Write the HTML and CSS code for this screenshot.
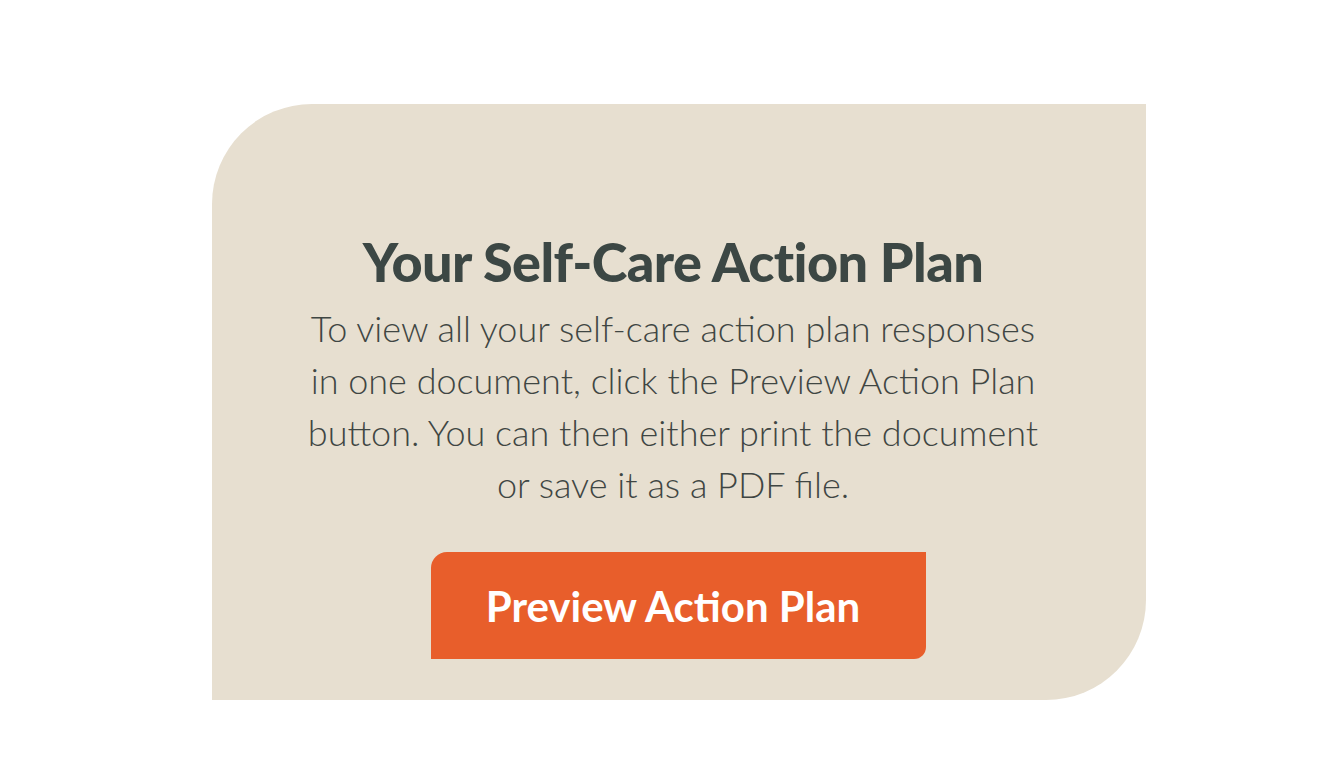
FILE: index.html
```html
<!DOCTYPE html>
<html>
<head>
<meta charset="utf-8">
<link rel="stylesheet" href="styles.css">
</head>
<body>
<main class="page">
  <section class="card">
    <div class="text">
      <h2 class="title">Your Self-Care Action Plan</h2>
      <p class="desc">To view all your self-care action plan responses in one document, click the Preview Action Plan button. You can then either print the document or save it as a PDF file.</p>
    </div>
    <button class="btn">Preview Action Plan</button>
  </section>
</main>
</body>
</html>
```

FILE: styles.css
```css
html, body {
  margin: 0;
  padding: 0;
  background: #ffffff;
}
.page {
  padding: 104px 0 0 212px;
}
.card {
  box-sizing: border-box;
  width: 934px;
  height: 596px;
  background: #e7dfd0;
  border-radius: 100px 0 100px 0;
  padding-top: 126px;
  display: flex;
  flex-direction: column;
}
.text {
  width: 748px;
  margin-left: 87px;
  text-align: center;
  color: #3d4643;
}
.title {
  margin: 0 0 8px;
  font-family: Lato, sans-serif;
  font-weight: 900;
  font-size: 54px;
  line-height: 64px;
  letter-spacing: -0.6px;
  color: #3c4744;
}
.desc {
  margin: 0;
  font-family: Lato, sans-serif;
  font-weight: 300;
  font-size: 36px;
  line-height: 52px;
  color: #3f4643;
}
.btn {
  margin: 42px 0 0 219px;
  width: 495px;
  height: 107px;
  border: none;
  background: #e85e2b;
  color: #ffffff;
  border-radius: 16px 0 12px 0;
  font-family: Lato, sans-serif;
  font-weight: 700;
  font-size: 42px;
  padding: 0 11px 0 0;
}
```
